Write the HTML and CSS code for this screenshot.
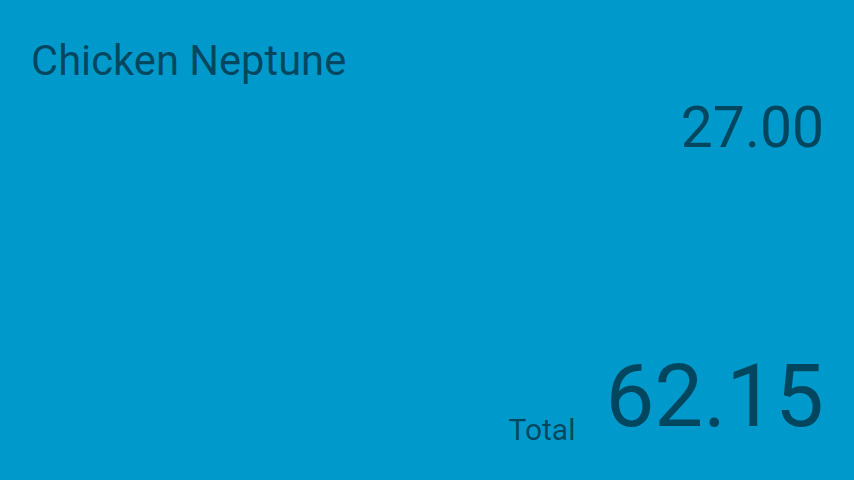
FILE: index.html
```html
<!DOCTYPE html>
<html>
<head>
<meta charset="utf-8">
<link rel="stylesheet" href="styles.css">
</head>
<body>
<div class="screen">
  <div class="name">Chicken Neptune</div>
  <div class="price">27.00</div>
  <div class="spacer"></div>
  <div class="total-row">
    <span class="total-label">Total</span>
    <span class="total-value">62.15</span>
  </div>
</div>
</body>
</html>
```
FILE: styles.css
```css
html, body {
  margin: 0;
  padding: 0;
  width: 854px;
  height: 480px;
  overflow: hidden;
  background: #0099cc;
}
.screen {
  box-sizing: border-box;
  width: 854px;
  height: 480px;
  padding: 37px 30px 35px 31px;
  display: flex;
  flex-direction: column;
  font-family: Roboto, "Noto Sans", sans-serif;
  color: rgba(0, 0, 0, 0.54);
}
.name {
  font-size: 41.7px;
  line-height: 48px;
}
.price {
  align-self: flex-end;
  margin-top: 11px;
  font-size: 57px;
  line-height: 64px;
}
.spacer { flex: 1; }
.total-row {
  display: flex;
  justify-content: flex-end;
  align-items: flex-end;
  gap: 30px;
}
.total-label {
  font-size: 30px;
  line-height: 30px;
}
.total-value {
  font-size: 87px;
  line-height: 88px;
  margin-bottom: 5px;
}
```
